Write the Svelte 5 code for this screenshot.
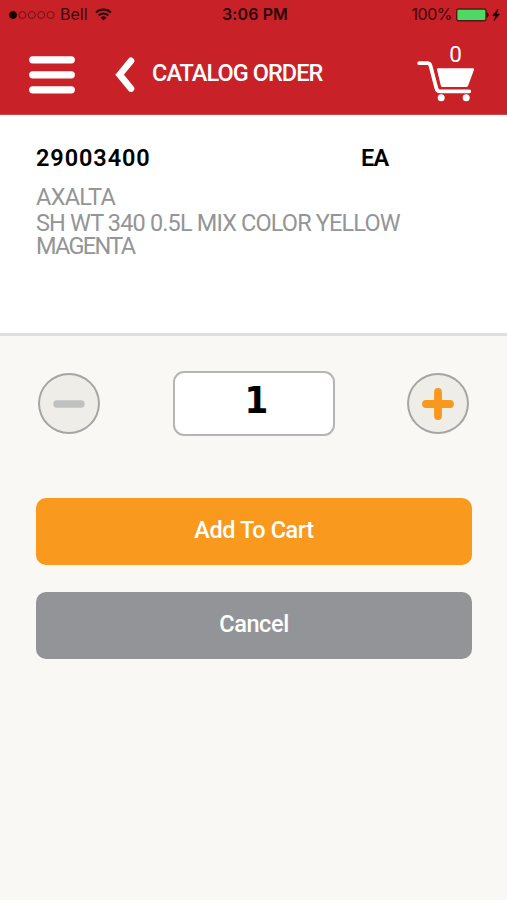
<script lang="ts">
	let quantity = 1;
	let cartCount = 0;

	const signal = [true, false, false, false, false];

	const item = {
		sku: '29003400',
		unit: 'EA',
		brand: 'AXALTA',
		name: 'SH WT 340 0.5L MIX COLOR YELLOW',
		detail: 'MAGENTA'
	};

	function decrease() {
		if (quantity > 1) quantity -= 1;
	}

	function increase() {
		quantity += 1;
	}

	function addToCart() {
		cartCount += quantity;
	}

	function cancel() {
		quantity = 1;
	}
</script>

<div class="screen">
	<header>
		<div class="status">
			<div class="carrier">
				<svg width="47" height="10" viewBox="0 0 47 10">
					{#each signal as on, i}
						<circle cx={5 + i * 9.4} cy="5" r="3.5" fill={on ? '#180002' : 'none'} stroke={on ? '#180002' : '#6a1216'} stroke-width="1" />
					{/each}
				</svg>
				<span class="network">Bell</span>
				<svg width="17" height="13" viewBox="0 0 17 13" fill="none" stroke="#250305" stroke-width="2">
					<path d="M1 4.6a10.8 10.8 0 0 1 15 0"></path>
					<path d="M3.6 7.5a7.1 7.1 0 0 1 9.8 0"></path>
					<path d="M8.5 12.6 5.6 9.6a4.2 4.2 0 0 1 5.8 0z" fill="#250305" stroke="none"></path>
				</svg>
			</div>
			<span class="time">3:06 PM</span>
			<div class="power">
				<span class="percent">100%</span>
				<svg width="46" height="14" viewBox="0 0 46 14">
					<rect x="0.7" y="1" width="29.3" height="11.8" rx="2" fill="#4cd964" stroke="#5c1417" stroke-width="1.4" />
					<path d="M31 4.5q3 2.4 0 4.8z" fill="#300507" stroke="#300507" stroke-width="0.6" />
					<path d="M42 1.3 36.5 7.7h3.2l-1.6 4.9 5.6-6.6h-3.2z" fill="#180002" stroke="#180002" stroke-width="0.5" />
				</svg>
			</div>
		</div>

		<nav>
			<button class="icon menu" aria-label="Menu">
				<svg width="46" height="38" viewBox="0 0 46 38" stroke="#fff" stroke-width="7.2" stroke-linecap="round">
					<line x1="3.7" y1="3.8" x2="42.3" y2="3.8"></line>
					<line x1="3.7" y1="18.8" x2="42.3" y2="18.8"></line>
					<line x1="3.7" y1="33.8" x2="42.3" y2="33.8"></line>
				</svg>
			</button>
			<button class="icon back" aria-label="Back">
				<svg width="20" height="36" viewBox="0 0 20 36" fill="none" stroke="#fff" stroke-width="6.6" stroke-linecap="round">
					<path d="M16 3.8 4.6 17.7 16 31.6"></path>
				</svg>
			</button>
			<h1>CATALOG ORDER</h1>
			<button class="icon cart" aria-label="Cart">
				<span class="count">{cartCount}</span>
				<svg width="58" height="42" viewBox="0 0 58 42" fill="none">
					<path d="M2.2 3.2h8.1q2.5 0 3.2 2.5l5.8 22.3q.8 3.3 3.6 3.3h29.4" stroke="#fff" stroke-width="3.8" stroke-linecap="round" stroke-linejoin="round"></path>
					<path d="M21 8.3h35q1.5 0 1 1.5l-5.8 15.6q-.6 1.6-2 1.6H25.5q-1.4 0-1.7-1.6L20 9.8q-.3-1.5 1-1.5z" fill="#fff"></path>
					<circle cx="24.2" cy="37.8" r="3.5" fill="#fff"></circle>
					<circle cx="49.2" cy="37.8" r="3.5" fill="#fff"></circle>
				</svg>
			</button>
		</nav>
	</header>

	<section class="item">
		<div class="heading">
			<strong class="sku">{item.sku}</strong>
			<strong class="unit">{item.unit}</strong>
		</div>
		<p class="brand">{item.brand}</p>
		<p class="name">{item.name}</p>
		<p class="detail">{item.detail}</p>
	</section>

	<section class="order">
		<div class="stepper">
			<button class="round" aria-label="Decrease" on:click={decrease}>
				<svg width="32" height="32" viewBox="0 0 32 32" stroke="#bec1bf" stroke-width="7.4" stroke-linecap="round">
					<line x1="4" y1="16" x2="28" y2="16"></line>
				</svg>
			</button>
			<div class="quantity">{quantity}</div>
			<button class="round" aria-label="Increase" on:click={increase}>
				<svg width="32" height="32" viewBox="0 0 32 32" stroke="#f8981d" stroke-width="7.8" stroke-linecap="round">
					<line x1="4" y1="16" x2="28" y2="16"></line>
					<line x1="16" y1="4" x2="16" y2="28"></line>
				</svg>
			</button>
		</div>
		<button class="action add" on:click={addToCart}><span>Add To Cart</span></button>
		<button class="action cancel" on:click={cancel}><span>Cancel</span></button>
	</section>
</div>

<style>
	:global(body) {
		margin: 0;
		background: #f9f8f4;
	}

	.screen {
		display: flex;
		flex-direction: column;
		width: 507px;
		height: 900px;
		overflow: hidden;
		background: #f9f8f4;
		font-family: Roboto, 'Liberation Sans', sans-serif;
	}

	button {
		margin: 0;
		padding: 0;
		border: 0;
		background: none;
		font: inherit;
		cursor: pointer;
	}

	svg {
		display: block;
		flex: none;
	}

	header {
		box-sizing: border-box;
		flex: none;
		height: 115px;
		background: #c82127;
		border-bottom: 1px solid #cd4449;
	}

	.status {
		display: grid;
		grid-template-columns: 1fr auto 1fr;
		align-items: center;
		height: 29px;
		padding: 0 5px 0 8px;
		font-family: Inter, 'Liberation Sans', sans-serif;
		font-size: 16px;
		line-height: 29px;
		color: #3c080b;
	}

	.carrier,
	.power {
		display: flex;
		align-items: center;
	}

	.power {
		justify-content: flex-end;
		gap: 4px;
	}

	.network {
		margin: 0 7px 0 5px;
	}

	.time {
		font-weight: 600;
		letter-spacing: 0.1px;
		color: #2b0507;
	}

	.percent {
		letter-spacing: -0.5px;
	}

	nav {
		display: flex;
		align-items: flex-start;
		height: 85px;
		padding: 0 32px 0 29px;
	}

	.icon {
		flex: none;
	}

	.menu {
		margin-top: 27px;
	}

	.back {
		margin: 28px 0 0 40px;
	}

	h1 {
		margin: 32px 0 0 17px;
		font-size: 23.5px;
		font-weight: 500;
		line-height: 24px;
		letter-spacing: -0.95px;
		white-space: nowrap;
		color: #fff;
	}

	.cart {
		display: flex;
		flex-direction: column;
		width: 58px;
		margin: 12px 0 0 auto;
		color: #fff;
	}

	.count {
		align-self: center;
		margin-left: 19px;
		font-size: 22.5px;
		line-height: 26px;
		height: 19px;
	}

	.item {
		box-sizing: border-box;
		flex: none;
		height: 221px;
		padding: 30px 36px 0;
		background: #fff;
		border-bottom: 3px solid #dfe0dc;
	}

	.heading {
		display: flex;
		font-size: 23.5px;
		line-height: 27px;
		color: #000;
	}

	.sku {
		width: 325px;
		font-weight: 600;
		letter-spacing: 0.9px;
	}

	.unit {
		font-weight: 600;
		letter-spacing: -0.8px;
	}

	.item p {
		margin: 0;
		font-size: 23.5px;
		line-height: 23px;
		letter-spacing: -0.85px;
		white-space: nowrap;
		color: #939596;
	}

	.item .brand {
		margin: 14px 0 3px;
		letter-spacing: -0.7px;
	}

	.item .detail {
		letter-spacing: -1.7px;
	}

	.order {
		padding: 35px 36px 0;
	}

	.stepper {
		display: flex;
		align-items: center;
		justify-content: space-between;
		height: 65px;
		margin: 0 2px 62px;
	}

	.round {
		display: flex;
		align-items: center;
		justify-content: center;
		box-sizing: border-box;
		width: 62px;
		height: 61px;
		border: 2px solid #a5a6a4;
		border-radius: 50%;
		background: #eeede7;
	}

	.quantity {
		box-sizing: border-box;
		width: 162px;
		height: 65px;
		border: 2px solid #b4b5b4;
		border-radius: 11px;
		padding-left: 6px;
		background: #fff;
		font-family: 'DejaVu Sans Condensed', 'DejaVu Sans', sans-serif;
		font-size: 38px;
		font-stretch: condensed;
		font-weight: 700;
		line-height: 54px;
		text-align: center;
		color: #000;
	}

	.action {
		display: block;
		width: 436px;
		height: 67px;
		border-radius: 10px;
		font-size: 23.5px;
		font-weight: 500;
		letter-spacing: -0.4px;
		color: #fff;
	}

	.action span {
		display: block;
		padding-bottom: 4px;
	}

	.add {
		margin-bottom: 27px;
		background: #f9991d;
	}

	.cancel {
		background: #929497;
	}
</style>
